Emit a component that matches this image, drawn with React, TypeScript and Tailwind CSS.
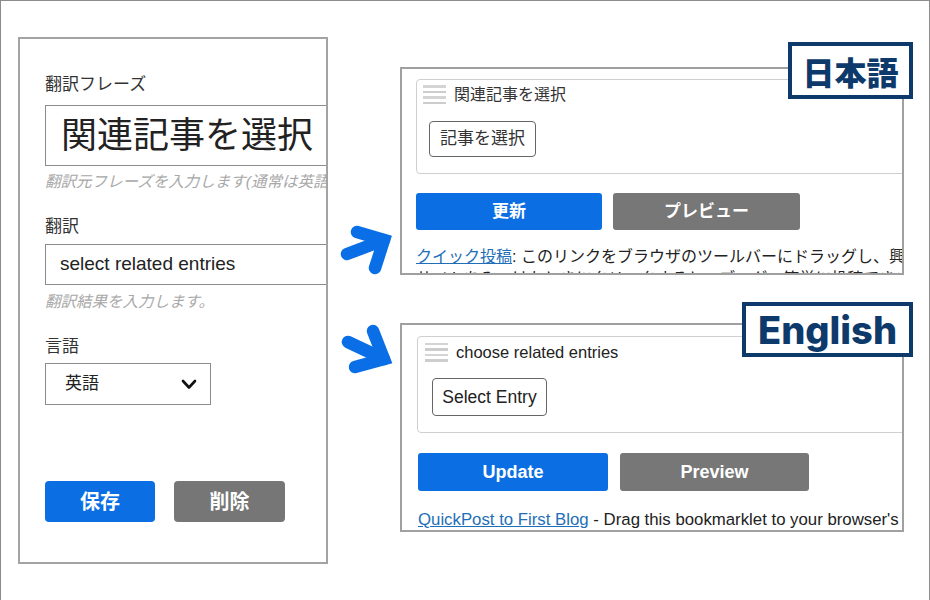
import React from 'react';

const Grip: React.FC = () => (
  <div className="flex flex-col gap-[3px] w-[23px] shrink-0">
    <div className="h-[2.5px] bg-[#d4d4d4]" />
    <div className="h-[2.5px] bg-[#cdcdcd]" />
    <div className="h-[2.5px] bg-[#d4d4d4]" />
    <div className="h-[2.5px] bg-[#cdcdcd]" />
  </div>
);

const Arrows: React.FC = () => (
  <svg width="72" height="165" viewBox="328 215 72 165" className="mt-[214px]">
    <g fill="none" stroke="#0a6fe6" strokeWidth="12.5" strokeLinecap="round" strokeLinejoin="miter">
      <path d="M347 254 L384 240" />
      <path d="M357 232 L384 240 L375 268" />
      <path d="M348 342 L384 359" />
      <path d="M373 331 L384 359 L355 367" />
    </g>
  </svg>
);

export default function App() {
  return (
    <div className="w-[930px] h-[600px] bg-white border-t border-l border-r border-[#8c8c8c] flex overflow-hidden font-['Liberation_Sans','Noto_Sans_CJK_JP',sans-serif]">
      {/* left: translation form */}
      <div className="ml-[17px] mt-[36px] w-[310px] h-[527px] shrink-0 border-2 border-[#a3a3a3] overflow-hidden pl-[25px] flex flex-col">
        <div className="mt-[34px] text-[17px] leading-[24px] text-[#333]">翻訳フレーズ</div>
        <div className="mt-[8px] h-[61px] w-[320px] shrink-0 border-[1.5px] border-[#8c8c8c] flex items-center pl-[15px] text-[36px] text-[#222] whitespace-nowrap">
          関連記事を選択
        </div>
        <div className="mt-[6px] text-[15.5px] leading-[20px] italic text-[#a8a8a8] whitespace-nowrap">
          翻訳元フレーズを入力します(通常は英語)
        </div>
        <div className="mt-[23px] text-[17px] leading-[24px] text-[#333]">翻訳</div>
        <div className="mt-[5px] h-[41px] w-[320px] shrink-0 border-[1.5px] border-[#8c8c8c] flex items-center pl-[14px] text-[19px] text-[#222] whitespace-nowrap">
          select related entries
        </div>
        <div className="mt-[7px] text-[15.5px] leading-[20px] italic text-[#a8a8a8] whitespace-nowrap">
          翻訳結果を入力します。
        </div>
        <div className="mt-[23px] text-[17px] leading-[24px] text-[#333]">言語</div>
        <div className="mt-[4px] h-[42px] w-[166px] shrink-0 border-[1.5px] border-[#8c8c8c] flex items-center justify-between pl-[19px] pr-[13px] text-[17px] text-[#222]">
          <span>英語</span>
          <svg width="16" height="11" viewBox="0 0 16 11">
            <path d="M2 2 L8 8.5 L14 2" fill="none" stroke="#111" strokeWidth="2.6" strokeLinecap="round" strokeLinejoin="round" />
          </svg>
        </div>
        <div className="mt-[76px] flex gap-[19px]">
          <button className="w-[110px] h-[41px] rounded-[4px] bg-[#0b6fe3] text-white text-[20px] font-bold">保存</button>
          <button className="w-[111px] h-[41px] rounded-[4px] bg-[#767676] text-white text-[20px] font-bold">削除</button>
        </div>
      </div>

      {/* arrows */}
      <div className="w-[72px] shrink-0 flex flex-col">
        <Arrows />
      </div>

      {/* right: previews */}
      <div className="w-[504px] shrink-0 flex flex-col mt-[66px]">
        {/* Japanese */}
        <div className="relative h-[208px]">
          <div className="h-full border-2 border-[#a0a0a0] overflow-hidden flex flex-col">
            <div className="ml-[14px] mt-[10px] h-[95px] w-[600px] shrink-0 border border-[#cfcfcf] rounded-l-[4px] pt-[5px] pl-[6px] flex flex-col">
              <div className="flex items-center gap-[8px] h-[19px]">
                <Grip />
                <span className="text-[16px] leading-[19px] text-[#333]">関連記事を選択</span>
              </div>
              <div className="ml-[6px] mt-[17px] w-[107px] h-[36px] border-[1.5px] border-[#666] rounded-[4px] flex items-center justify-center text-[17px] text-[#333]">
                記事を選択
              </div>
            </div>
            <div className="ml-[14px] mt-[19px] flex gap-[11px]">
              <button className="w-[186px] h-[37px] rounded-[3px] bg-[#0b6fe3] text-white text-[17px] font-bold">更新</button>
              <button className="w-[187px] h-[37px] rounded-[3px] bg-[#777] text-white text-[17px] font-bold">プレビュー</button>
            </div>
            <div className="ml-[14px] mt-[16px] w-[556px] shrink-0 text-[16px] leading-[22px] text-[#222]">
              <a className="text-[#1e6fb8] underline">クイック投稿</a>: このリンクをブラウザのツールバーにドラッグし、興味のあるサイトをみつけたときにクリックすると、ブログへ簡単に投稿できます。
            </div>
          </div>
          <div className="absolute left-[388px] top-[-25px] w-[125px] h-[57px] border-4 border-[#0d3a6b] bg-white flex items-center justify-center text-[32px] leading-none font-black text-[#0d3a6b] font-['Noto_Sans_CJK_JP',sans-serif]">
            日本語
          </div>
        </div>

        {/* English */}
        <div className="relative mt-[48px] h-[209px]">
          <div className="h-full border-2 border-[#a0a0a0] overflow-hidden flex flex-col">
            <div className="ml-[15px] mt-[11px] h-[97px] w-[600px] shrink-0 border border-[#cfcfcf] rounded-l-[4px] pt-[5px] pl-[7px] flex flex-col">
              <div className="flex items-center gap-[8px] h-[20px]">
                <Grip />
                <span className="text-[16.5px] leading-[20px] text-[#222]">choose related entries</span>
              </div>
              <div className="ml-[7px] mt-[16px] w-[115px] h-[38px] border-[1.5px] border-[#666] rounded-[4px] flex items-center justify-center text-[17.5px] text-[#222]">
                Select Entry
              </div>
            </div>
            <div className="ml-[16px] mt-[20px] flex gap-[12px]">
              <button className="w-[190px] h-[38px] rounded-[3px] bg-[#0b6fe3] text-white text-[18px] font-bold">Update</button>
              <button className="w-[189px] h-[38px] rounded-[3px] bg-[#777] text-white text-[18px] font-bold">Preview</button>
            </div>
            <div className="ml-[16px] mt-[18px] text-[16.8px] leading-[22px] text-[#222] whitespace-nowrap">
              <a className="text-[#1e6fb8] underline">QuickPost to First Blog</a> - Drag this bookmarklet to your browser's toolbar
            </div>
          </div>
          <div className="absolute left-[342px] top-[-21px] w-[171px] h-[55px] border-4 border-[#0d3a6b] bg-white flex items-center justify-center text-[38px] leading-none font-extrabold text-[#0d3a6b] font-['Inter',sans-serif]">
            English
          </div>
        </div>
      </div>
    </div>
  );
}
